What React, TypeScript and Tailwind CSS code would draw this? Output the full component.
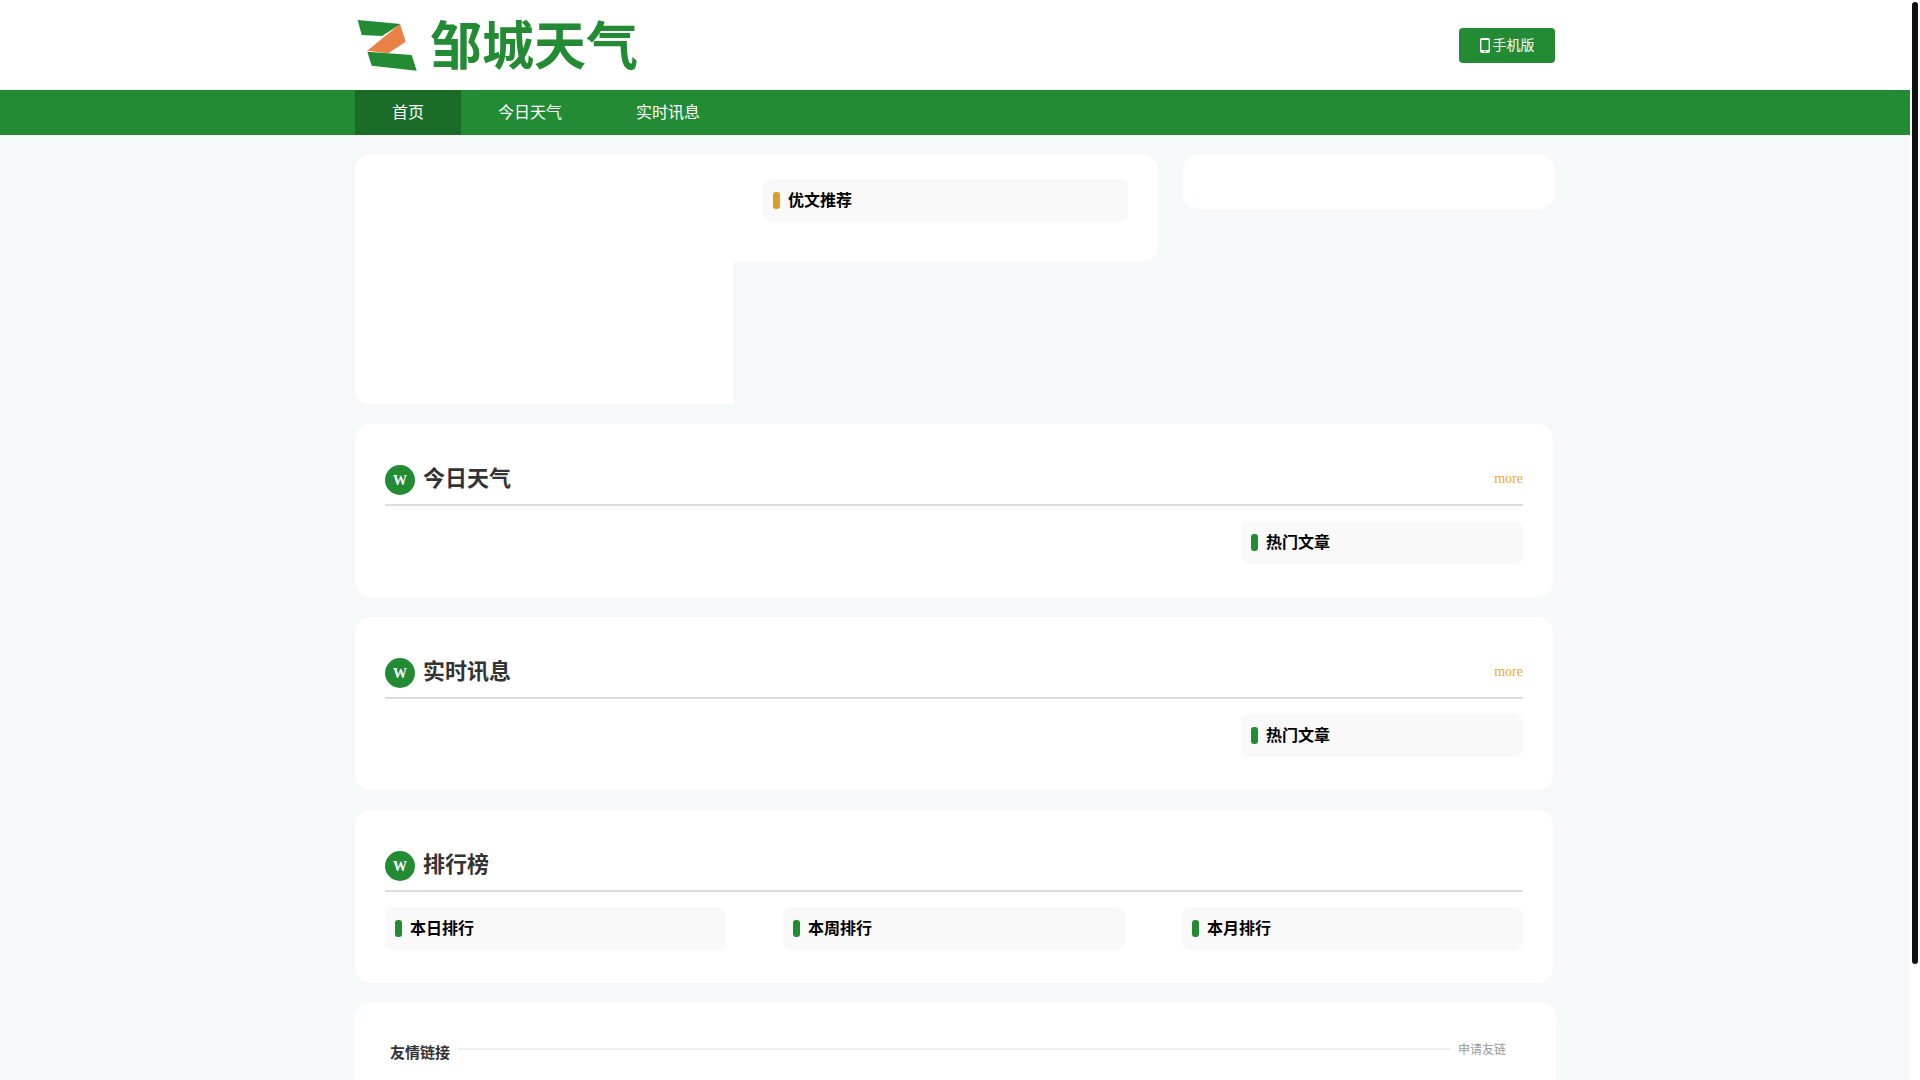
const bodyFont = {
  fontFamily: '"Liberation Serif", "Noto Sans CJK SC", serif',
};

const navItems = [
  { label: "首页", active: true },
  { label: "今日天气", active: false },
  { label: "实时讯息", active: false },
];

function LogoMark() {
  return (
    <svg width="64" height="56" viewBox="0 0 64 56" className="-mt-[4px] shrink-0">
      <polygon points="2.7,5 45.7,9 27,21 6.7,20" fill="#228b33" />
      <polygon points="45,9 50.7,26.7 33.3,38.3 12.3,35.7" fill="#e98244" />
      <polygon points="12.3,36.7 56.7,40 61.7,55.7 16.7,50.7" fill="#228b33" />
    </svg>
  );
}

function PhoneIcon() {
  return (
    <svg width="10" height="15" viewBox="0 0 10 15" className="shrink-0">
      <rect x="0" y="0" width="10" height="15" rx="2" fill="#fff" />
      <rect x="1.4" y="2" width="7.2" height="10" fill="#228b33" />
      <circle cx="5" cy="13.4" r="0.8" fill="#228b33" />
    </svg>
  );
}

function ListHeader({ title, bar = "bg-[#228b33]", className = "" }: { title: string; bar?: string; className?: string }) {
  return (
    <div className={`flex h-[43px] items-center rounded-lg bg-[#f9f9f9] pl-[10px] ${className}`}>
      <span className={`h-[17px] w-[7px] rounded-[3px] ${bar}`} />
      <span className="ml-[8px] text-base font-bold text-black">{title}</span>
    </div>
  );
}

function SectionHeader({ title, more = false }: { title: string; more?: boolean }) {
  return (
    <div className="flex items-center border-b-2 border-[#dddddd] pt-[41px] pb-[9px]">
      <span className="flex h-[30px] w-[30px] items-center justify-center rounded-full bg-[#228b33] pt-[2px] text-sm font-bold text-white">
        W
      </span>
      <h2 className="-mt-[3px] ml-[8px] text-[22px] leading-[30px] font-bold text-[#333333]">{title}</h2>
      {more && <a className="-mt-[3px] ml-auto text-sm text-[#e9a92f]">more</a>}
    </div>
  );
}

function Section({ title, more, children }: { title: string; more?: boolean; children: React.ReactNode }) {
  return (
    <section className="mb-[20px] h-[173px] w-[1198px] rounded-[15px] bg-white px-[30px]">
      <SectionHeader title={title} more={more} />
      <div className="pt-[15px]">{children}</div>
    </section>
  );
}

export default function App() {
  return (
    <div style={bodyFont} className="flex h-screen overflow-hidden bg-white">
      <div className="h-[1207px] w-[1910px] shrink-0 bg-[#f5f9fa]">
        <header className="bg-white">
          <div className="mx-auto flex h-[90px] w-[1200px] items-center justify-between">
            <div className="flex items-center">
              <LogoMark />
              <span className="mt-[6px] ml-[11px] text-[52px] leading-none font-bold text-[#228b33]">邹城天气</span>
            </div>
            <a className="flex h-[35px] w-[96px] items-center justify-center gap-[3px] rounded bg-[#228b33] text-sm text-white">
              <PhoneIcon />
              <span className="pt-[2px]">手机版</span>
            </a>
          </div>
        </header>

        <nav className="bg-[#228b33]">
          <ul className="mx-auto flex h-[45px] w-[1200px]">
            {navItems.map((item) => (
              <li
                key={item.label}
                className={`px-[37px] text-base leading-[45px] text-white ${item.active ? "bg-[#1a6b27]" : ""}`}
              >
                {item.label}
              </li>
            ))}
          </ul>
        </nav>

        <main className="mx-auto w-[1200px] pt-[20px]">
          <div className="mb-[20px] flex h-[249px] items-start justify-between">
            <div className="h-[107px] w-[803px] rounded-[15px] bg-white">
              <div className="float-left h-[249px] w-[378px] rounded-l-[15px] bg-white" />
              <div className="float-right mt-[24px] mr-[30px] w-[365px]">
                <ListHeader title="优文推荐" bar="bg-[#daa025]" />
              </div>
            </div>
            <div className="h-[54px] w-[372px] rounded-[15px] bg-white" />
          </div>

          <Section title="今日天气" more>
            <ListHeader title="热门文章" className="ml-auto w-[282px]" />
          </Section>

          <Section title="实时讯息" more>
            <ListHeader title="热门文章" className="ml-auto w-[282px]" />
          </Section>

          <Section title="排行榜">
            <div className="flex gap-[57px]">
              <ListHeader title="本日排行" className="w-[341px]" />
              <ListHeader title="本周排行" className="w-[342px]" />
              <ListHeader title="本月排行" className="w-[341px]" />
            </div>
          </Section>

          <section className="-ml-px h-[187px] w-[1202px] rounded-[15px] bg-white pt-[37px] pl-[36px]">
            <div className="flex items-start">
              <h3 className="mt-[2px] text-[15px] leading-[22px] font-bold text-[#333333]">友情链接</h3>
              <span className="mt-[8px] ml-[8px] h-[2px] w-[992px] bg-[#eeeeee]" />
              <a className="mt-[1px] ml-[8px] text-xs leading-[18px] text-[#999999]">申请友链</a>
            </div>
          </section>
        </main>
      </div>

      <div className="w-[10px] shrink-0 pt-[2px] pl-[2px]">
        <div className="h-[962px] w-[6px] rounded-[3px] bg-[#111111]" />
      </div>
    </div>
  );
}
